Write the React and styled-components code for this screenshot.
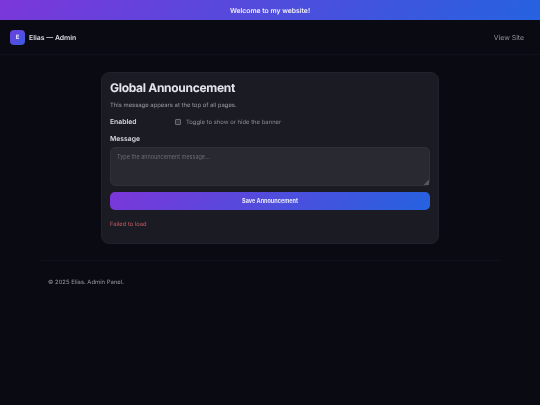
import React from 'react';
import styled, { createGlobalStyle } from 'styled-components';

const Global = createGlobalStyle`
    html, body {
        margin: 0;
        padding: 0;
        background: #0a0b12;
        font-family: Inter, "Liberation Sans", sans-serif;
        text-rendering: geometricPrecision;
    }
`
const Page = styled.div`
    width: 540px;
    min-height: 405px;
    display: flex;
    flex-direction: column;
    background: #0a0b12;
    overflow: hidden;
    filter: blur(0.25px);
`
const Banner = styled.div`
    height: 20px;
    display: flex;
    align-items: center;
    justify-content: center;
    background: linear-gradient(135deg, #7b36d9, #2563e0);
    color: #f0eefc;
    font-size: 6.8px;
    font-weight: 600;
`
const Header = styled.header`
    height: 34px;
    padding: 0 16px 0 10px;
    display: flex;
    align-items: center;
    justify-content: space-between;
    border-bottom: 1px solid #10111a;
`
const Brand = styled.div`
    display: flex;
    align-items: center;
    gap: 4px;
    color: #dcdce4;
    font-size: 6.9px;
    font-weight: 600;
`
const Logo = styled.div`
    width: 15px;
    height: 15px;
    border-radius: 4px;
    display: flex;
    align-items: center;
    justify-content: center;
    background: linear-gradient(135deg, #6d3fe0, #3a5be0);
    color: #e8e8fa;
    font-size: 6px;
    font-weight: 700;
`
const ViewLink = styled.a`
    color: #94959c;
    font-size: 6.9px;
`
const Card = styled.section`
    width: 320px;
    margin: 17px 0 0 101px;
    padding: 7px 8px 14px;
    display: flex;
    flex-direction: column;
    background: #1a1b23;
    border: 1px solid #20212a;
    border-radius: 8px;
`
const Title = styled.h1`
    margin: 0;
    color: #e4e4ec;
    font-size: 12px;
    letter-spacing: -0.3px;
    line-height: 15px;
    font-weight: 700;
`
const Hint = styled.p`
    margin: 6px 0 0;
    color: #9a9ba3;
    font-size: 5.9px;
    line-height: 10px;
`
const ToggleRow = styled.div`
    margin-top: 6px;
    display: flex;
    align-items: center;
    height: 10px;
`
const Label = styled.label`
    color: #d8d8de;
    font-size: 6.8px;
    font-weight: 600;
    line-height: 10px;
`
const EnabledLabel = styled(Label)`
    width: 65px;
`
const Check = styled.input`
    appearance: none;
    width: 6px;
    height: 6px;
    margin: 0 5px 0 0;
    border: 1px solid #6b6c72;
    border-radius: 1px;
    background: #33343b;
    box-sizing: border-box;
`
const ToggleText = styled.span`
    color: #8a8b92;
    font-size: 5.9px;
`
const MessageLabel = styled(Label)`
    margin-top: 7px;
`
const Field = styled.textarea`
    display: block;
    margin-top: 3px;
    height: 39px;
    padding: 5px 6px;
    box-sizing: border-box;
    background: #282931;
    border: 1px solid #2f3038;
    border-radius: 5px;
    color: #e8e8ee;
    font-family: inherit;
    font-size: 5.5px;
    line-height: 8px;
    &::placeholder {
        color: #6a6b73;
    }
    &::-webkit-resizer {
        background: linear-gradient(135deg, transparent 82%, #55565e 82%);
    }
`
const SaveButton = styled.button`
    margin-top: 6px;
    height: 18px;
    padding: 0;
    border: 0;
    border-radius: 5px;
    background: linear-gradient(135deg, #7b36d9, #2563e0);
    color: #e8e8fa;
    font-family: inherit;
    font-size: 5.5px;
    font-weight: 700;
`
const ErrorText = styled.div`
    margin-top: 10px;
    color: #c85c62;
    font-size: 5.8px;
    line-height: 9px;
`
const Footer = styled.footer`
    width: 452px;
    margin: 16px 0 0 40px;
    padding: 17px 0 0 8px;
    border-top: 1px solid #10111a;
    color: #9a9ba3;
    font-size: 5.9px;
    line-height: 9px;
`

export default function App() {
    return (
        <Page>
            <Global />
            <Banner>Welcome to my website!</Banner>
            <Header>
                <Brand>
                    <Logo>E</Logo>
                    Elias — Admin
                </Brand>
                <ViewLink>View Site</ViewLink>
            </Header>
            <Card>
                <Title>Global Announcement</Title>
                <Hint>This message appears at the top of all pages.</Hint>
                <ToggleRow>
                    <EnabledLabel>Enabled</EnabledLabel>
                    <Check type="checkbox" />
                    <ToggleText>Toggle to show or hide the banner</ToggleText>
                </ToggleRow>
                <MessageLabel>Message</MessageLabel>
                <Field placeholder="Type the announcement message..." />
                <SaveButton>Save Announcement</SaveButton>
                <ErrorText>Failed to load</ErrorText>
            </Card>
            <Footer>© 2025 Elias. Admin Panel.</Footer>
        </Page>
    );
}
